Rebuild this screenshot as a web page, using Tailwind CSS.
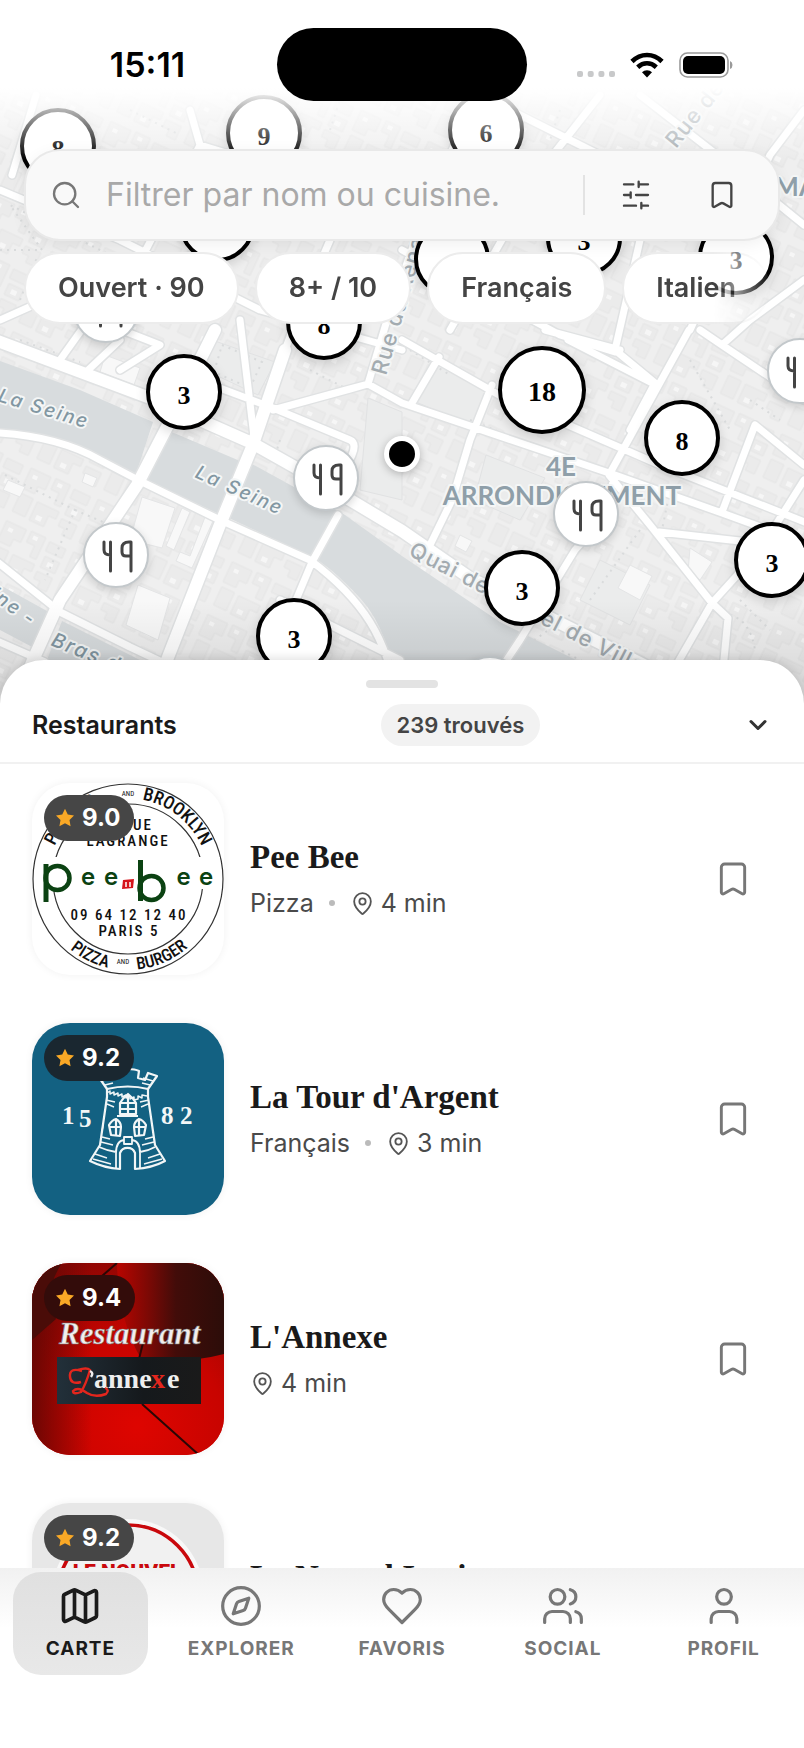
<!DOCTYPE html>
<html lang="fr">
<head>
<meta charset="utf-8">
<meta name="viewport" content="width=device-width, initial-scale=1">
<title>Restaurants</title>
<script src="https://cdn.jsdelivr.net/npm/@tailwindcss/browser@4"></script>
</head>
<body class="bg-white">
<svg class="hidden" aria-hidden="true">
  <symbol id="bookmark" viewBox="0 0 24 24"><path d="M17 3a2 2 0 0 1 2 2v15a1 1 0 0 1-1.496.868l-4.512-2.578a2 2 0 0 0-1.984 0l-4.512 2.578A1 1 0 0 1 5 20V5a2 2 0 0 1 2-2z"/></symbol>
  <symbol id="pin" viewBox="0 0 24 24"><path d="M20 10c0 4.993-5.539 10.193-7.399 11.799a1 1 0 0 1-1.202 0C9.539 20.193 4 14.993 4 10a8 8 0 0 1 16 0"/><circle cx="12" cy="10" r="3"/></symbol>
  <symbol id="star" viewBox="0 0 24 24"><path d="M12 1l3.300 6.900 7.500 1.100-5.400 5.300 1.300 7.500L12 18.300l-6.700 3.500 1.300-7.500L1.200 9l7.500-1.100z"/></symbol>
  <symbol id="cutlery" viewBox="-20 -20 40 40"><path d="M-12 -13v8q0 5 6.500 5M-5.500 -13V16M15 16V-13H13Q6 -13 6 -7V-3Q6 1 10 1H15"/></symbol>
</svg>

<div class="flex h-screen flex-col overflow-hidden bg-white font-['Inter',sans-serif] text-[#1a1a1a]">

  <header class="relative h-[704px] shrink-0 overflow-hidden bg-[#eeefef]">
    <!-- Map -->
    <svg class="absolute inset-0 h-full w-full" viewBox="0 0 804 704" preserveAspectRatio="xMidYMid slice" aria-hidden="true">
      <defs>
        <pattern id="blocks" width="74" height="58" patternUnits="userSpaceOnUse" patternTransform="rotate(25)">
          <rect width="74" height="58" fill="#efefef"/>
          <path d="M4 5h22v14h-8v8H4zM31 4h16v24h-7V16h-9zM52 6h18v10H52zM54 21h16v12H54zM5 32h14v20H5zM24 33h24v8h-8v12H24zM53 38h17v15H60v-7h-7z" fill="#ebebeb" stroke="#e5e6e6" stroke-width="1"/>
          <path d="M9 10h5v4H9zM35 7h5v4h-5zM59 25h6v5h-6zM29 45h6v5h-6z" fill="#f6f6f6"/>
        </pattern>
        <linearGradient id="low" x1="0" y1="0" x2="0" y2="1"><stop offset="0" stop-color="#000" stop-opacity="0"/><stop offset="1" stop-color="#000" stop-opacity=".12"/></linearGradient>
        <path id="quai" d="M408 555Q500 603 720 716"/>
      </defs>
      <rect width="804" height="704" fill="url(#blocks)"/>
      <g fill="#d8dcde">
        <path d="M0 361L80 390 153 422 135 477 85 453 40 439 0 434z"/>
        <path d="M167 430L240 461 219 514 147 481z"/>
        <path d="M252 464L345 515 402 556 500 622 600 672 700 704H400Q390 630 360 598T312 557L229 518z"/>
        <path d="M0 585L56 616 36 649 0 630zM62 621L140 660 150 704H30z"/>
      </g>
      <g fill="#ebecec" stroke="#e1e2e3">
        <path d="M440 362L492 390 476 428 416 402z"/><path d="M486 455L545 478 520 520 474 500z"/>
        <path d="M368 398L402 412V500L360 490z"/><path d="M212 340L275 362 258 395 205 370z"/>
        <path d="M600 560L650 585 630 625 580 600z"/>
      </g>
      <g fill="#f8f8f8" stroke="#e4e5e6">
        <path d="M142 497L175 508 162 548 130 540z"/><path d="M138 585L170 598 158 640 126 625z"/><path d="M105 355L140 368 134 385 100 372z"/>
        <path d="M8 480L25 487 20 497 3 490zM85 473L97 478 93 487 82 482zM630 565L652 576 640 600 618 588zM690 548L712 562 700 580 688 572zM460 535L472 541 466 552 455 546z"/>
        <path d="M182 508L190 512 174 550 166 546zM205 517L213 521 192 568 176 561 180 552 190 556z"/>
      </g>
      <g fill="none" stroke="#d9dbdc" stroke-width="2" stroke-dasharray="2 5">
        <path d="M5 475L75 510 45 580M75 510L110 525M20 340L80 362M222 345L262 362 250 388 214 372zM310 370L345 388M280 440L272 465M0 250H42L10 205 60 230 120 260M20 300L38 255M130 110L180 135M330 130L340 100M470 420L540 448M500 380L560 405M590 600L640 530M690 360L730 430M740 600L770 630M730 615Q750 620 755 650M570 615L520 650M750 400L780 420M410 350L450 375M460 460L450 500M620 680L560 650M660 540L668 500M560 110L550 140"/>
      </g>
      <g fill="none" stroke-linejoin="round" stroke-linecap="round">
        <g stroke="#e0e2e3">
          <g stroke-width="15"><path d="M-5 340L150 398 252 443 300 470 402 531 470 578 650 668 720 704M168 425L137 485 60 600 33 660 15 704M285 350L252 447 219 527 165 665 150 704M215 330L190 380"/></g>
          <g stroke-width="10"><path d="M0 433Q60 437 100 460L140 481 220 520 310 560Q350 590 370 622T398 704M-5 560L60 612 130 647 200 680M-5 640L45 662M217 387L273 408 350 440Q357 443 352 455L345 470M273 410L350 389 368 384 402 403 615 475 722 513 810 545M285 350L300 310 330 240M368 384L390 310 430 200 470 110M689 330L609 475 650 525 712 603 677 664M402 340L499 395 660 465 810 524M712 603L728 618 722 680M712 603L760 550 804 480M615 475L602 520 575 550 520 640 500 670M659 532L740 541M439 357L412 403M492 385L470 440 452 500 430 545M568 340L652 383M640 240L615 350 655 383 630 430M402 250L560 335 615 352M490 100L760 235M600 95L545 165 450 330M640 95L730 165 804 225M804 110L770 155 690 330M0 190L120 240 260 310 402 350M36 95L12 175M110 290L60 360M0 320L45 300 160 345 120 370M190 110L200 145 380 200M200 145L120 300M255 445L240 320M700 330L722 345 750 320 804 280M722 345L804 400M755 425L722 512M755 425L804 465M338 515L312 562 296 600M280 600L400 660M545 330L620 350M120 340L85 373"/></g>
        </g>
        <g stroke="#fff">
          <g stroke-width="12"><path d="M-5 340L150 398 252 443 300 470 402 531 470 578 650 668 720 704M168 425L137 485 60 600 33 660 15 704M285 350L252 447 219 527 165 665 150 704M215 330L190 380"/></g>
          <g stroke-width="7"><path d="M0 433Q60 437 100 460L140 481 220 520 310 560Q350 590 370 622T398 704M-5 560L60 612 130 647 200 680M-5 640L45 662M217 387L273 408 350 440Q357 443 352 455L345 470M273 410L350 389 368 384 402 403 615 475 722 513 810 545M285 350L300 310 330 240M368 384L390 310 430 200 470 110M689 330L609 475 650 525 712 603 677 664M402 340L499 395 660 465 810 524M712 603L728 618 722 680M712 603L760 550 804 480M615 475L602 520 575 550 520 640 500 670M659 532L740 541M439 357L412 403M492 385L470 440 452 500 430 545M568 340L652 383M640 240L615 350 655 383 630 430M402 250L560 335 615 352M490 100L760 235M600 95L545 165 450 330M640 95L730 165 804 225M804 110L770 155 690 330M0 190L120 240 260 310 402 350M36 95L12 175M110 290L60 360M0 320L45 300 160 345 120 370M190 110L200 145 380 200M200 145L120 300M255 445L240 320M700 330L722 345 750 320 804 280M722 345L804 400M755 425L722 512M755 425L804 465M338 515L312 562 296 600M280 600L400 660M545 330L620 350M120 340L85 373"/></g>
        </g>
      </g>
      <g fill="#8297a2" stroke="#f4f6f6" stroke-width="4" paint-order="stroke" stroke-linejoin="round" font-family="Inter, sans-serif" font-size="20" font-weight="500">
        <g font-style="italic" letter-spacing="2">
          <text transform="translate(-3 401) rotate(17)" font-size="19">La Seine</text>
          <text transform="translate(194 477) rotate(24)" font-size="19">La Seine</text>
          <text transform="translate(-33 581) rotate(36)" font-size="19">Seine -</text>
          <text transform="translate(50 645) rotate(22)">Bras de la</text>
        </g>
        <g fill="#a3abb0" font-size="22" letter-spacing="1">
          <text><textPath href="#quai">Quai de l’Hôtel de Ville</textPath></text>
          <text transform="translate(676 149) rotate(-51)">Rue de Bretagne</text>
          <text transform="translate(386 376) rotate(-74)">Rue du Renard</text>
        </g>
        <g font-family="Lato, sans-serif" font-weight="700" font-size="26" fill="#8f9fa9" text-anchor="middle">
          <text x="561" y="476">4E</text>
          <text x="562" y="505">ARRONDISSEMENT</text>
          <text x="824" y="196">MARAIS</text>
        </g>
      </g>
      <rect y="600" width="804" height="104" fill="url(#low)"/>
    </svg>

    <!-- Map markers, filled by the script at the end of the page -->
    <div id="markers" class="absolute inset-0"></div>
    <div class="pointer-events-none absolute inset-x-0 top-0 h-[160px] bg-linear-to-b from-white from-55% to-white/0"></div>

    <div class="relative flex flex-col">
      <div class="grid grid-cols-[1fr_250px_1fr] items-center px-[18px] pt-7">
        <time class="text-center text-[34px] leading-10 font-semibold text-black">15:11</time>
        <div class="h-[73px] rounded-full bg-black"></div>
        <div class="flex items-center justify-center gap-[15px] pr-1">
          <svg class="h-[26px] w-[38px]" viewBox="0 0 38 26" fill="#c8c9ca" aria-hidden="true"><rect y="19" width="6" height="6" rx="2"/><rect x="10.700" y="19" width="6" height="6" rx="2"/><rect x="21.400" y="19" width="6" height="6" rx="2"/><rect x="32" y="19" width="6" height="6" rx="2"/></svg>
          <svg class="h-[26px] w-[34px]" viewBox="0 0 34 26" aria-hidden="true"><g fill="none" stroke="#000" stroke-width="4.600"><path d="M2 9.500Q8.500 3 17 3T32 9.500"/><path d="M7.700 15.200Q12 11.300 17 11.300T26.300 15.200"/></g><path d="M17 25.500L12 20.300Q14 18.200 17 18.200T22 20.300z"/></svg>
          <svg class="h-[28px] w-[54px]" viewBox="0 0 54 28" aria-hidden="true"><rect x="1" y="2" width="48" height="24" rx="7.500" fill="none" stroke="#9a9a9a" stroke-width="1.600"/><rect x="4" y="5" width="42" height="18" rx="5"/><path d="M51 10Q53.500 11 53.500 14T51 18z" fill="#9a9a9a"/></svg>
        </div>
      </div>

      <form class="mx-6 mt-12 flex h-[92px] items-center rounded-[36px] border-2 border-[#e9e9e9] bg-[#f9f9f9] pr-[13px] pl-6 shadow-[0_4px_16px_rgba(0,0,0,0.06)]" onsubmit="return false">
        <svg class="size-8 shrink-0" viewBox="0 0 24 24" fill="none" stroke="#777" stroke-width="1.750" stroke-linecap="round" aria-hidden="true"><circle cx="11" cy="11" r="8"/><path d="m21 21-4.340-4.340"/></svg>
        <input type="text" aria-label="Filtrer par nom ou cuisine" placeholder="Filtrer par nom ou cuisine." class="ml-6 min-w-0 flex-1 bg-transparent text-[32px] leading-10 outline-none placeholder:text-[#a9a9a9]">
        <div class="h-10 w-[2px] bg-[#e3e3e3]"></div>
        <button type="button" aria-label="Filtres" class="ml-2 flex size-[86px] items-center justify-center">
          <svg class="size-8" viewBox="0 0 24 24" fill="none" stroke="#444" stroke-width="1.750" stroke-linecap="round"><path d="M21 4h-7M10 4H3M21 12h-9M8 12H3M21 20h-5M12 20H3M14 2v4M8 10v4M16 18v4"/></svg>
        </button>
        <button type="button" aria-label="Enregistrés" class="flex size-[86px] items-center justify-center">
          <svg class="size-8" fill="none" stroke="#444" stroke-width="1.750" stroke-linejoin="round"><use href="#bookmark"/></svg>
        </button>
      </form>

      <div class="mx-6 mt-[11px] flex gap-4 overflow-hidden pb-4 text-[27px] font-semibold whitespace-nowrap text-[#444] mask-r-from-91% mask-r-to-99%">
        <button type="button" class="h-[72px] shrink-0 rounded-full border-2 border-[#ececec] bg-white px-8">Ouvert · 90</button>
        <button type="button" class="h-[72px] shrink-0 rounded-full border-2 border-[#ececec] bg-white px-8">8+ / 10</button>
        <button type="button" class="h-[72px] shrink-0 rounded-full border-2 border-[#ececec] bg-white px-8">Français</button>
        <button type="button" class="h-[72px] shrink-0 rounded-full border-2 border-[#ececec] bg-white px-8">Italien</button>
      </div>
    </div>
  </header>

  <main class="relative -mt-11 flex min-h-0 flex-1 flex-col overflow-hidden rounded-t-[44px] bg-white shadow-[0_-2px_10px_rgba(0,0,0,0.12)]">
    <div class="mx-auto mt-5 h-2 w-[72px] shrink-0 rounded-full bg-[#e3e3e3]"></div>
    <div class="flex shrink-0 items-center justify-between border-b-2 border-[#f1f1f1] px-8 py-4">
      <h1 class="text-[25px] leading-8 font-semibold">Restaurants</h1>
      <span class="rounded-full bg-[#f2f2f2] px-4 text-[22px] leading-[42px] font-semibold text-[#444]">239 trouvés</span>
      <button type="button" aria-label="Réduire la liste">
        <svg class="size-7" viewBox="0 0 24 24" fill="none" stroke="#333" stroke-width="2.600" stroke-linecap="round" stroke-linejoin="round"><path d="m6 9 6 6 6-6"/></svg>
      </button>
    </div>

    <ul class="flex min-h-0 flex-1 flex-col gap-12 overflow-hidden pt-[19px] pr-10 pl-8">
      <li class="flex shrink-0 items-center">
        <div class="relative size-48 shrink-0 overflow-hidden rounded-[38px] bg-white shadow-[0_0_8px_rgba(0,0,0,0.06)]">
          <svg class="size-full" viewBox="0 0 192 192" font-family="'Liberation Sans Narrow','Roboto Condensed',Roboto,sans-serif" text-anchor="middle" fill="#111">
            <defs><path id="arcTop" d="M15.500 96a80.500 80.500 0 0 1 161 0"/><path id="arcBottom" d="M5 96a91 91 0 0 0 182 0"/></defs>
            <circle cx="96" cy="96" r="95" fill="none" stroke="#333" stroke-width="1.200"/><circle cx="96" cy="96" r="75" fill="none" stroke="#333" stroke-width="1.200"/>
            <rect x="8" y="74" width="180" height="32" fill="#fff"/>
            <g font-size="18" font-weight="500">
              <text text-anchor="start"><textPath href="#arcTop" startOffset="34">PANINIS</textPath></text>
              <text text-anchor="end"><textPath href="#arcTop" startOffset="219">BROOKLYN</textPath></text>
              <text font-size="17"><textPath href="#arcBottom" startOffset="101">PIZZA</textPath></text>
              <text font-size="17"><textPath href="#arcBottom" startOffset="180">BURGER</textPath></text>
            </g>
            <text x="96" y="13" font-size="7">AND</text><text x="91" y="181" font-size="7">AND</text>
            <g font-size="15" font-weight="500" letter-spacing="2"><text x="106" y="47">RUE</text><text x="96" y="63">LAGRANGE</text></g>
            <g font-size="15" font-weight="500" letter-spacing="2"><text x="97" y="137">09 64 12 12 40</text><text x="97" y="153">PARIS 5</text></g>
            <g fill="none" stroke="#0b4212">
              <path d="M14 81V119" stroke-width="5"/><circle cx="25.500" cy="95" r="12" stroke-width="4.500"/>
              <path d="M108.500 77V118" stroke-width="5"/><circle cx="119.500" cy="105" r="12" stroke-width="4.500"/>
            </g>
            <g fill="#0b4212" font-family="Inter, sans-serif" font-weight="600" font-size="24"><text x="56" y="102">e</text><text x="79" y="102">e</text><text x="151.500" y="102">e</text><text x="174" y="102">e</text></g>
            <path d="M91 97l11-1-1 9-11 1z" fill="#d5141b"/><path d="M94 99v5M98 99v5" stroke="#fff" stroke-width="1.500"/>
          </svg>
          <span class="absolute top-3 left-3 flex h-[46px] items-center gap-[7px] rounded-full bg-[#464646] pr-[14px] pl-[11px] text-2xl font-bold text-white"><svg class="size-5" fill="#f9a826"><use href="#star"/></svg>9.0</span>
        </div>
        <div class="ml-[26px] flex min-w-0 flex-1 flex-col gap-3">
          <h2 class="truncate font-['Liberation_Serif',serif] text-[33px] leading-9 font-bold">Pee Bee</h2>
          <p class="flex items-center text-[25px] leading-8 text-[#4a4a4a]">Pizza<span class="mx-[15px] size-[6px] rounded-full bg-[#bbb]"></span><svg class="mr-[6px] size-[25px]" fill="none" stroke="#555" stroke-width="1.750"><use href="#pin"/></svg>4 min</p>
        </div>
        <button type="button" aria-label="Enregistrer Pee Bee" class="p-[11px]"><svg class="size-10" fill="none" stroke="#777" stroke-width="1.750" stroke-linejoin="round"><use href="#bookmark"/></svg></button>
      </li>

      <li class="flex shrink-0 items-center">
        <div class="relative size-48 shrink-0 overflow-hidden rounded-[38px] bg-[#136182] shadow-[0_0_8px_rgba(0,0,0,0.06)]">
          <svg class="size-full" viewBox="0 0 192 192" fill="none" stroke="#f2f6f7" stroke-width="2.200" stroke-linejoin="round">
            <path d="M75 66L66 53 74 50 77 57 84 55 83 48Q89 46 96 46T107 48L106 55 113 57 116 50 125 53 116 66Q96 61 75 66z"/>
            <path d="M75 70l3-2v3l4-2v3l4-2v3l4-2v3l4-2v3l4-2v3l4-2v3l4-1v-3l4 2v-3l5 1" stroke-width="1.500"/>
            <path d="M75 66V74L68 122 58 138Q72 145 88 146V130a8 8 0 0 1 15 0V146Q120 145 133 138L123 122 116 74V66"/>
            <path d="M67 124Q76 128 84 129V145M123 124Q116 128 108 129V145M84 130Q84 118 92 117V121H100V117Q108 118 108 130M92 117V114H100V117" stroke-width="1.800"/>
            <path d="M88 91V80Q91 75 96 71Q101 75 104 80V91zM85 93H106M96 72V94M88 80H104M88 86H104"/>
            <path d="M79 112L77 102Q80 97 84 96Q89 99 89 104L88 113zM84 97V112M78 104H89M112 112L114 102Q111 97 107 96Q102 99 102 104L103 113zM107 97V112M102 104H113"/>
            <path d="M74 77l9 2M75 81l7 3M117 77l-9 2M116 81l-7 3M71 103l-1 5M70 114l8 2M69 119l12 3M121 114l-8 2M122 119l-12 3M63 131l12 4M61 136l18 5M128 131l-12 4M130 136l-18 5M70 58l10-3M73 62l8-2M121 58l-10-3M118 62l-8-2" stroke-width="1.400"/>
            <g fill="#f2f6f7" stroke="none" font-family="'Liberation Serif',serif" font-weight="700" font-size="25"><text x="30" y="101">1</text><text x="47" y="104">5</text><text x="129" y="101">8</text><text x="148" y="101">2</text></g>
          </svg>
          <span class="absolute top-3 left-3 flex h-[46px] items-center gap-[7px] rounded-full bg-[#1a2730] pr-[14px] pl-[11px] text-2xl font-bold text-white"><svg class="size-5" fill="#f9a826"><use href="#star"/></svg>9.2</span>
        </div>
        <div class="ml-[26px] flex min-w-0 flex-1 flex-col gap-3">
          <h2 class="truncate font-['Liberation_Serif',serif] text-[33px] leading-9 font-bold">La Tour d'Argent</h2>
          <p class="flex items-center text-[25px] leading-8 text-[#4a4a4a]">Français<span class="mx-[15px] size-[6px] rounded-full bg-[#bbb]"></span><svg class="mr-[6px] size-[25px]" fill="none" stroke="#555" stroke-width="1.750"><use href="#pin"/></svg>3 min</p>
        </div>
        <button type="button" aria-label="Enregistrer La Tour d'Argent" class="p-[11px]"><svg class="size-10" fill="none" stroke="#777" stroke-width="1.750" stroke-linejoin="round"><use href="#bookmark"/></svg></button>
      </li>

      <li class="flex shrink-0 items-center">
        <div class="relative size-48 shrink-0 overflow-hidden rounded-[38px] bg-[#c00] shadow-[0_0_8px_rgba(0,0,0,0.06)]">
          <svg class="size-full" viewBox="0 0 192 192">
            <defs>
              <radialGradient id="red" cx=".55" cy=".85" r=".9"><stop offset="0" stop-color="#de0500"/><stop offset=".5" stop-color="#c80400"/><stop offset="1" stop-color="#8f0603"/></radialGradient>
              <linearGradient id="dark" x1="0" y1="0" x2="1" y2="0"><stop offset="0" stop-color="#b80500"/><stop offset=".3" stop-color="#7a0905"/><stop offset=".55" stop-color="#420c09"/><stop offset="1" stop-color="#2c0d09"/></linearGradient>
              <linearGradient id="edge"><stop offset="0" stop-color="#5a0704" stop-opacity=".8"/><stop offset="1" stop-color="#5a0704" stop-opacity="0"/></linearGradient>
              <linearGradient id="plate"><stop offset="0" stop-color="#22303a"/><stop offset=".6" stop-color="#15191c"/><stop offset="1" stop-color="#1a1a1a"/></linearGradient>
            </defs>
            <rect width="192" height="192" fill="url(#red)"/>
            <rect width="60" height="192" fill="url(#edge)"/>
            <path d="M85 0H192V91Q150 102 108 94Q86 55 85 0z" fill="url(#dark)"/>
            <path d="M0 0H30Q10 30 24 56L0 77z" fill="#4a0c08"/>
            <path d="M85 0L70 13M111 80L107 96M110 141L167 192" stroke="#2a0705" stroke-width="2" fill="none"/>
            <text x="27" y="81" font-family="'Liberation Serif',serif" font-style="italic" font-weight="700" font-size="31" fill="#f3eeee" stroke="#777" stroke-width=".6">Restaurant</text>
            <rect x="25" y="94" width="144" height="47" fill="url(#plate)"/>
            <g font-family="'Liberation Serif',serif" font-weight="700" font-size="28"><text x="62" y="125" fill="#eee">anne</text><text x="119" y="125" fill="#e3261d">x</text><text x="135" y="125" fill="#eee">e</text></g>
            <path d="M50 108q-13-4-12 6 1 8 11 5M46 107q9-3 12 0-4 14-9 22-8 3-8-1 5-5 14 2 8 5 19 1 4-4-1-6" fill="none" stroke="#e3261d" stroke-width="2.400"/>
            <path d="M58 108q4 2 1 6" stroke="#eee" stroke-width="2.500" fill="none"/>
          </svg>
          <span class="absolute top-3 left-3 flex h-[46px] items-center gap-[7px] rounded-full bg-[#330c0a] pr-[14px] pl-[11px] text-2xl font-bold text-white"><svg class="size-5" fill="#f9a826"><use href="#star"/></svg>9.4</span>
        </div>
        <div class="ml-[26px] flex min-w-0 flex-1 flex-col gap-3">
          <h2 class="truncate font-['Liberation_Serif',serif] text-[33px] leading-9 font-bold">L'Annexe</h2>
          <p class="flex items-center text-[25px] leading-8 text-[#4a4a4a]"><svg class="mr-[6px] size-[25px]" fill="none" stroke="#555" stroke-width="1.750"><use href="#pin"/></svg>4 min</p>
        </div>
        <button type="button" aria-label="Enregistrer L'Annexe" class="p-[11px]"><svg class="size-10" fill="none" stroke="#777" stroke-width="1.750" stroke-linejoin="round"><use href="#bookmark"/></svg></button>
      </li>

      <li class="flex shrink-0 items-center">
        <div class="relative size-48 shrink-0 overflow-hidden rounded-[38px] bg-[#e7e7e7] shadow-[0_0_8px_rgba(0,0,0,0.06)]">
          <svg class="size-full" viewBox="0 0 192 192"><circle cx="96" cy="92" r="76" fill="#f8f8f8"/><circle cx="96" cy="92" r="70" fill="#f1f1f1" stroke="#c9080c" stroke-width="3.500"/><text x="95" y="76" text-anchor="middle" font-family="Roboto, sans-serif" font-weight="900" font-size="21" fill="#c9080c">LE NOUVEL</text></svg>
          <span class="absolute top-3 left-3 flex h-[46px] items-center gap-[7px] rounded-full bg-[#464646] pr-[14px] pl-[11px] text-2xl font-bold text-white"><svg class="size-5" fill="#f9a826"><use href="#star"/></svg>9.2</span>
        </div>
        <div class="ml-[26px] flex min-w-0 flex-1 flex-col gap-3">
          <h2 class="truncate font-['Liberation_Serif',serif] text-[33px] leading-9 font-bold">Le Nouvel Institut</h2>
          <p class="flex items-center text-[25px] leading-8 text-[#4a4a4a]"><svg class="mr-[6px] size-[25px]" fill="none" stroke="#555" stroke-width="1.750"><use href="#pin"/></svg>5 min</p>
        </div>
      </li>
    </ul>
  </main>

  <nav class="relative grid shrink-0 grid-cols-5 bg-linear-to-b from-[#f1f1f1] to-white to-[60px] pt-1 pb-[73px] text-[19px] leading-6 font-bold tracking-wider text-[#777]" aria-label="Navigation principale">
    <a href="#carte" aria-current="page" class="mx-[13px] flex h-[103px] flex-col items-center gap-[9px] rounded-[28px] bg-linear-to-b from-[#e0e0e0] to-[#e8e8e8] pt-3 text-[#1a1a1a]">
      <svg class="size-11" viewBox="0 0 24 24" fill="none" stroke="currentColor" stroke-width="2" stroke-linecap="round" stroke-linejoin="round"><path d="M14.106 5.553a2 2 0 0 0 1.788 0l3.659-1.830A1 1 0 0 1 21 4.619v12.764a1 1 0 0 1-.553.894l-4.553 2.277a2 2 0 0 1-1.788 0l-4.212-2.106a2 2 0 0 0-1.788 0l-3.659 1.830A1 1 0 0 1 3 19.381V6.618a1 1 0 0 1 .553-.894l4.553-2.277a2 2 0 0 1 1.788 0zM15 5.764v15M9 3.236v15"/></svg>CARTE</a>
    <a href="#explorer" class="flex flex-col items-center gap-[9px] pt-3">
      <svg class="size-11" viewBox="0 0 24 24" fill="none" stroke="currentColor" stroke-width="1.750" stroke-linecap="round" stroke-linejoin="round"><circle cx="12" cy="12" r="10"/><path d="m16.240 7.760-1.804 5.411a2 2 0 0 1-1.265 1.265L7.760 16.240l1.804-5.411a2 2 0 0 1 1.265-1.265z"/></svg>EXPLORER</a>
    <a href="#favoris" class="flex flex-col items-center gap-[9px] pt-3">
      <svg class="size-11" viewBox="0 0 24 24" fill="none" stroke="currentColor" stroke-width="1.750" stroke-linecap="round" stroke-linejoin="round"><path d="M19 14c1.490-1.460 3-3.210 3-5.500A5.500 5.500 0 0 0 16.500 3c-1.760 0-3 .5-4.500 2-1.500-1.500-2.740-2-4.500-2A5.500 5.500 0 0 0 2 8.500c0 2.300 1.500 4.050 3 5.500l7 7Z"/></svg>FAVORIS</a>
    <a href="#social" class="flex flex-col items-center gap-[9px] pt-3">
      <svg class="size-11" viewBox="0 0 24 24" fill="none" stroke="currentColor" stroke-width="1.750" stroke-linecap="round" stroke-linejoin="round"><path d="M16 21v-2a4 4 0 0 0-4-4H6a4 4 0 0 0-4 4v2M22 21v-2a4 4 0 0 0-3-3.870M16 3.130a4 4 0 0 1 0 7.750"/><circle cx="9" cy="7" r="4"/></svg>SOCIAL</a>
    <a href="#profil" class="flex flex-col items-center gap-[9px] pt-3">
      <svg class="size-11" viewBox="0 0 24 24" fill="none" stroke="currentColor" stroke-width="1.750" stroke-linecap="round" stroke-linejoin="round"><path d="M19 21v-2a4 4 0 0 0-4-4H9a4 4 0 0 0-4 4v2"/><circle cx="12" cy="7" r="4"/></svg>PROFIL</a>
  </nav>
</div>

<script>
  // x is measured from the middle of the map, y from its top; n is the cluster count.
  const places = [
    {x: -296, y: 310}, {x: -76, y: 478}, {x: -286, y: 555}, {x: 184, y: 514}, {x: 398, y: 371}, {x: 88, y: 689},
    {x: -344, y: 146, n: 8}, {x: -138, y: 133, n: 9}, {x: 84, y: 130, n: 6}, {x: -185, y: 224, n: 3},
    {x: 50, y: 259, n: 5}, {x: 182, y: 238, n: 3}, {x: 334, y: 257, n: 3}, {x: -78, y: 322, n: 8},
    {x: -218, y: 392, n: 3}, {x: 140, y: 390, n: 18}, {x: 280, y: 438, n: 8}, {x: -108, y: 636, n: 3},
    {x: 120, y: 588, n: 3}, {x: 370, y: 560, n: 3}
  ];
  const look = {
    single: 'absolute flex size-[66px] -translate-1/2 items-center justify-center rounded-full border-2 border-[#c3c8cb] bg-white shadow-[0_3px_8px_rgba(0,0,0,0.15)]',
    group: 'absolute flex size-[76px] -translate-1/2 items-center justify-center rounded-full border-4 border-black bg-white pt-2 font-["Liberation_Serif",serif] text-[26px] leading-8 font-bold text-black shadow-[0_4px_12px_rgba(0,0,0,0.15)]',
    large: 'absolute flex size-[88px] -translate-1/2 items-center justify-center rounded-full border-4 border-black bg-white pt-1 font-["Liberation_Serif",serif] text-[28px] leading-8 font-bold text-black shadow-[0_4px_12px_rgba(0,0,0,0.15)]'
  };
  const layer = document.getElementById('markers');
  for (const p of places) {
    const b = document.createElement('button');
    b.type = 'button';
    b.className = !p.n ? look.single : p.n > 9 ? look.large : look.group;
    b.style.left = `calc(50% + ${p.x}px)`;
    b.style.top = `${p.y}px`;
    b.setAttribute('aria-label', p.n ? `${p.n} restaurants` : 'Restaurant');
    // The count at x 50 sits behind the filter chips.
    if (p.n) b.textContent = p.x === 50 ? '' : p.n;
    else b.innerHTML = '<svg class="size-10 shrink-0" fill="none" stroke="#444" stroke-width="3" stroke-linecap="round" stroke-linejoin="round"><use href="#cutlery"/></svg>';
    layer.append(b);
  }
  const me = document.createElement('div');
  me.className = 'absolute top-[454px] left-1/2 size-9 -translate-1/2 rounded-full border-5 border-white bg-black shadow-[0_2px_8px_rgba(0,0,0,0.25)]';
  layer.append(me);
</script>
</body>
</html>
